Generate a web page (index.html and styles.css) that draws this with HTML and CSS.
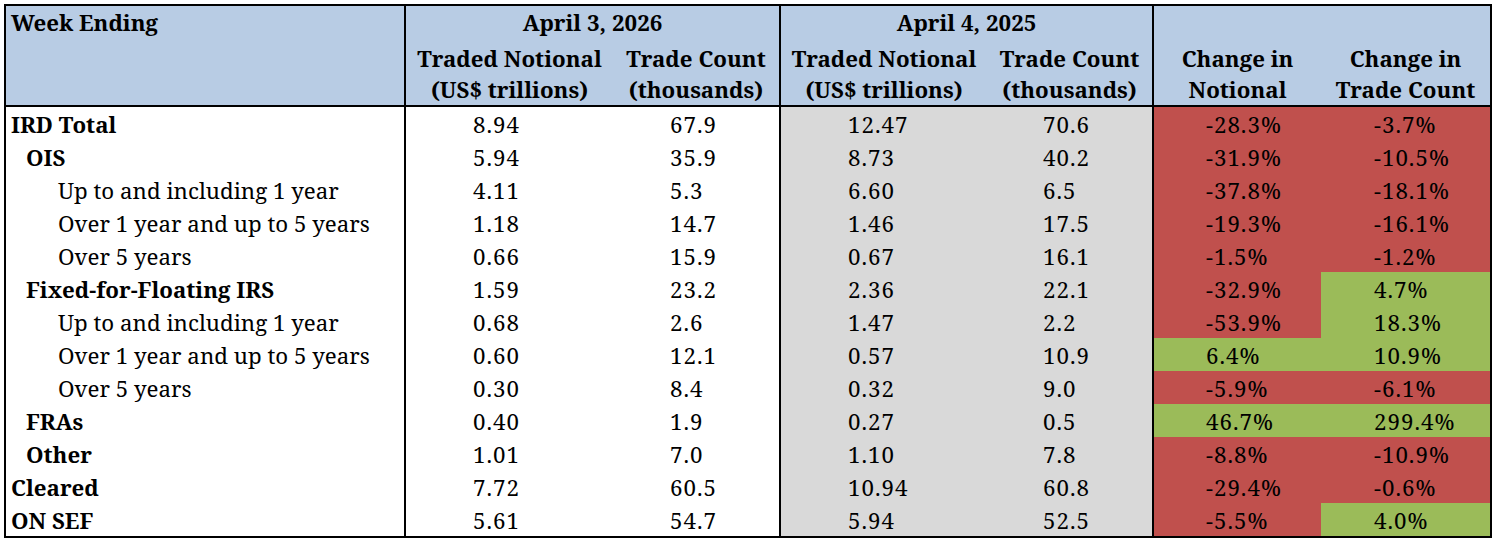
FILE: index.html
```html
<!DOCTYPE html>
<html>
<head>
<meta charset="utf-8">
<link rel="stylesheet" href="styles.css">
</head>
<body>
<table class="sdr">
  <colgroup>
    <col class="c-label">
    <col class="c-b">
    <col class="c-c">
    <col class="c-d">
    <col class="c-e">
    <col class="c-f">
    <col class="c-g">
  </colgroup>
  <thead>
    <tr class="h1">
      <th class="week" rowspan="2">Week Ending</th>
      <th class="date grp" colspan="2">April 3, 2026</th>
      <th class="date grp" colspan="2">April 4, 2025</th>
      <th class="sub" rowspan="2">Change in<br>Notional</th>
      <th class="sub" rowspan="2">Change in<br>Trade Count</th>
    </tr>
    <tr class="h2">
      <th class="sub">Traded Notional<br>(US$ trillions)</th>
      <th class="sub grp">Trade Count<br>(thousands)</th>
      <th class="sub">Traded Notional<br>(US$ trillions)</th>
      <th class="sub grp">Trade Count<br>(thousands)</th>
    </tr>
  </thead>
  <tbody>
    <tr><td class="lbl l0">IRD Total</td><td class="b">8.94</td><td class="c">67.9</td><td class="d">12.47</td><td class="e">70.6</td><td class="f neg">-28.3%</td><td class="g neg">-3.7%</td></tr>
    <tr><td class="lbl l1">OIS</td><td class="b">5.94</td><td class="c">35.9</td><td class="d">8.73</td><td class="e">40.2</td><td class="f neg">-31.9%</td><td class="g neg">-10.5%</td></tr>
    <tr><td class="lbl l2">Up to and including 1 year</td><td class="b">4.11</td><td class="c">5.3</td><td class="d">6.60</td><td class="e">6.5</td><td class="f neg">-37.8%</td><td class="g neg">-18.1%</td></tr>
    <tr><td class="lbl l2">Over 1 year and up to 5 years</td><td class="b">1.18</td><td class="c">14.7</td><td class="d">1.46</td><td class="e">17.5</td><td class="f neg">-19.3%</td><td class="g neg">-16.1%</td></tr>
    <tr><td class="lbl l2">Over 5 years</td><td class="b">0.66</td><td class="c">15.9</td><td class="d">0.67</td><td class="e">16.1</td><td class="f neg">-1.5%</td><td class="g neg">-1.2%</td></tr>
    <tr><td class="lbl l1">Fixed-for-Floating IRS</td><td class="b">1.59</td><td class="c">23.2</td><td class="d">2.36</td><td class="e">22.1</td><td class="f neg">-32.9%</td><td class="g pos">4.7%</td></tr>
    <tr><td class="lbl l2">Up to and including 1 year</td><td class="b">0.68</td><td class="c">2.6</td><td class="d">1.47</td><td class="e">2.2</td><td class="f neg">-53.9%</td><td class="g pos">18.3%</td></tr>
    <tr><td class="lbl l2">Over 1 year and up to 5 years</td><td class="b">0.60</td><td class="c">12.1</td><td class="d">0.57</td><td class="e">10.9</td><td class="f pos">6.4%</td><td class="g pos">10.9%</td></tr>
    <tr><td class="lbl l2">Over 5 years</td><td class="b">0.30</td><td class="c">8.4</td><td class="d">0.32</td><td class="e">9.0</td><td class="f neg">-5.9%</td><td class="g neg">-6.1%</td></tr>
    <tr><td class="lbl l1">FRAs</td><td class="b">0.40</td><td class="c">1.9</td><td class="d">0.27</td><td class="e">0.5</td><td class="f pos">46.7%</td><td class="g pos">299.4%</td></tr>
    <tr><td class="lbl l1">Other</td><td class="b">1.01</td><td class="c">7.0</td><td class="d">1.10</td><td class="e">7.8</td><td class="f neg">-8.8%</td><td class="g neg">-10.9%</td></tr>
    <tr><td class="lbl l0">Cleared</td><td class="b">7.72</td><td class="c">60.5</td><td class="d">10.94</td><td class="e">60.8</td><td class="f neg">-29.4%</td><td class="g neg">-0.6%</td></tr>
    <tr><td class="lbl l0">ON SEF</td><td class="b">5.61</td><td class="c">54.7</td><td class="d">5.94</td><td class="e">52.5</td><td class="f neg">-5.5%</td><td class="g pos">4.0%</td></tr>
  </tbody>
</table>
</body>
</html>
```
FILE: styles.css
```css
html, body {
  margin: 0;
  padding: 0;
  background: #ffffff;
}

.sdr {
  margin: 4px 0 0 4px;
  border-collapse: collapse;
  table-layout: fixed;
  width: 1488px;
  border: 2px solid #000;
  font-family: "Noto Serif", "Caladea", "DejaVu Serif", serif;
  font-size: 22.3px;
  color: #000;
}

.c-label { width: 400px; }
.c-b { width: 208px; }
.c-c { width: 167px; }
.c-d { width: 207px; }
.c-e { width: 166px; }
.c-f { width: 168px; }
.c-g { width: 170px; }

/* header */
thead th {
  background: #b8cce4;
  font-weight: 700;
  line-height: 31px;
  padding: 0;
  white-space: nowrap;
}

.h1 { height: 36px; }
.h2 { height: 65px; }

thead .week {
  text-align: left;
  vertical-align: top;
  padding: 1px 0 0 5px;
  border-right: 2px solid #000;
  border-bottom: 2px solid #000;
}

thead .date {
  text-align: center;
  vertical-align: top;
  padding-top: 1px;
}

thead .sub {
  text-align: center;
  vertical-align: bottom;
  padding-bottom: 0;
  border-bottom: 2px solid #000;
}

thead .grp { border-right: 2px solid #000; }

/* body */
tbody tr { height: 33px; }

tbody td {
  padding: 2px 0 0 0;
  line-height: 31px;
  vertical-align: middle;
  white-space: nowrap;
  text-align: left;
}

.lbl { border-right: 2px solid #000; }
.l0 { font-weight: 700; padding-left: 5px; }
.l1 { font-weight: 700; padding-left: 20px; }
.l2 { padding-left: 52px; }

.b, .c, .d, .e, .f, .g { letter-spacing: 1px; }

.b { padding-left: 67px; }
.c { padding-left: 57px; border-right: 2px solid #000; }
.d { padding-left: 67px; background: #d9d9d9; }
.e { padding-left: 56px; background: #d9d9d9; border-right: 2px solid #000; }
.f { padding-left: 52px; }
.g { padding-left: 53px; }

.neg { background: #c0504d; }
.pos { background: #9bbb59; }
```
